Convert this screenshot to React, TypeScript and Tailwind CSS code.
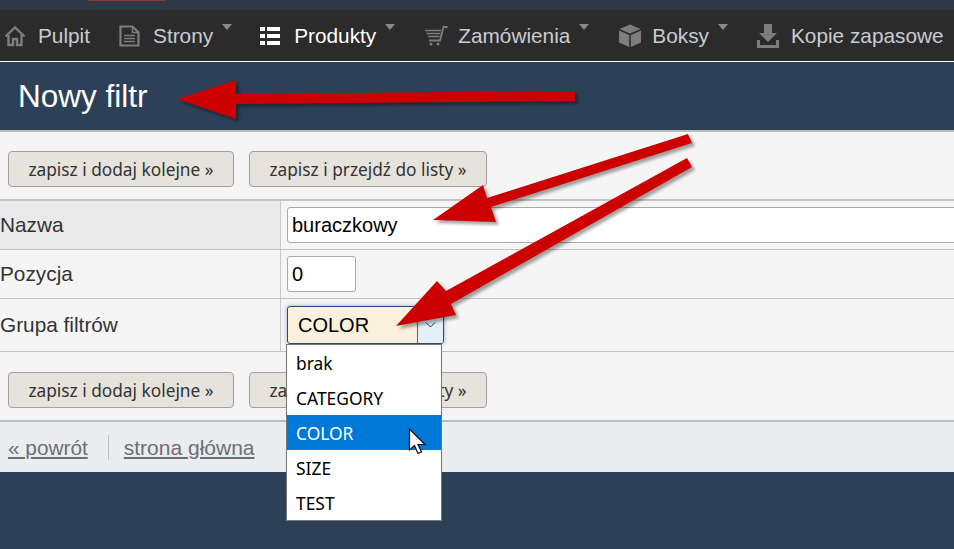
import type { ReactNode } from 'react';

const NAV_GRAY = '#7d7d7d';

function HomeIcon() {
  return (
    <svg width="22" height="22" viewBox="0 0 22 22" fill="none" stroke={NAV_GRAY} strokeWidth="2.4">
      <path d="M1.5 11.5 11 2.5l9.5 9" />
      <path d="M4.5 10v10h4.5v-6h4v6h4.5V10" />
    </svg>
  );
}

function PageIcon() {
  return (
    <svg width="22" height="22" viewBox="0 0 22 22" fill="none" stroke={NAV_GRAY}>
      <path d="M1.5 1.5h12l6 6v13h-18z" strokeWidth="2.2" />
      <path d="M13.5 2v5.5H19" strokeWidth="1.6" />
      <path d="M5 10.5h11M5 13.5h11M5 16.5h11" strokeWidth="1.6" />
    </svg>
  );
}

function ListIcon() {
  return (
    <svg width="20" height="20" viewBox="0 0 20 20" fill="#fff">
      <rect x="0" y="1" width="5" height="4" />
      <rect x="7" y="1" width="13" height="4" />
      <rect x="0" y="8" width="5" height="4" />
      <rect x="7" y="8" width="13" height="4" />
      <rect x="0" y="15" width="5" height="4" />
      <rect x="7" y="15" width="13" height="4" />
    </svg>
  );
}

function CartIcon() {
  return (
    <svg width="24" height="20" viewBox="0 0 24 20" fill="none" stroke={NAV_GRAY}>
      <path d="M23.5 1h-4l-3.5 13.5H5" strokeWidth="1.8" />
      <path d="M1 4.5h16M2.5 7.5h14M4 10.500h11.500" strokeWidth="1.6" />
      <circle cx="7" cy="18" r="1.500" fill={NAV_GRAY} stroke="none" />
      <circle cx="14" cy="18" r="1.500" fill={NAV_GRAY} stroke="none" />
    </svg>
  );
}

function BoxIcon() {
  return (
    <svg width="24" height="24" viewBox="0 0 24 24" fill={NAV_GRAY}>
      <path d="M12 0.500 22.500 5 12 9.500 1.500 5z" />
      <path d="M1 6.500 11.200 11v12L1 18.500z" />
      <path d="M23 6.500 12.800 11v12L23 18.500z" />
    </svg>
  );
}

function DownloadIcon() {
  return (
    <svg width="22" height="24" viewBox="0 0 22 24" fill={NAV_GRAY}>
      <path d="M7 0h8v9h5l-9 9-9-9h5z" />
      <path d="M0 16h3v5h16v-5h3v8H0z" />
    </svg>
  );
}

function NavItem({ icon, label, caret, active, className }: { icon: ReactNode; label: string; caret?: boolean; active?: boolean; className?: string }) {
  return (
    <div className={`flex items-center h-full shrink-0 ${className ?? ''}`}>
      <div className="w-[34px] shrink-0 flex items-center">{icon}</div>
      <span className={`text-[20.8px] leading-none pt-[1px] ${active ? 'text-white' : 'text-[#c8ccd2]'}`}>{label}</span>
      {caret && (
        <span className="ml-[9px] mb-[17px] w-0 h-0 border-x-[5.5px] border-x-transparent border-t-[6px] border-t-[#8a8a8a]"></span>
      )}
    </div>
  );
}

function SaveButtons() {
  return (
    <div className="flex gap-[15px]">
      <button className="w-[226px] h-[36px] pt-[2px] rounded-[4px] border border-[#a3a09b] bg-[#e6e2dc] text-[#333] text-[17.3px] font-['Noto_Sans',sans-serif]">
        zapisz i dodaj kolejne »
      </button>
      <button className="w-[238px] h-[36px] pt-[2px] rounded-[4px] border border-[#a3a09b] bg-[#e6e2dc] text-[#333] text-[17.3px] font-['Noto_Sans',sans-serif]">
        zapisz i przejdź do listy »
      </button>
    </div>
  );
}

function FormRow({ label, labelBg, height, children }: { label: string; labelBg?: string; height: string; children: ReactNode }) {
  return (
    <div className={`flex border-b border-[#c4c4c4] ${height}`}>
      <div className={`w-[281px] shrink-0 flex items-center text-[20.8px] text-[#333] border-r border-[#c9c9c9] ${labelBg ?? ''}`}>{label}</div>
      <div className="flex-1 pl-[6px] flex items-center">{children}</div>
    </div>
  );
}

function Arrows() {
  return (
    <svg className="absolute left-0 top-0 drop-shadow-[3px_3px_1.5px_rgba(0,0,0,0.35)] pointer-events-none" width="954" height="549" fill="#cc0000">
      <polygon points="177,99 236,80 236,94 575,91 575,101 236,104 236,119" />
      <polygon points="433,220 483,185 487,198 688,134 692,143 491,207 496,222" />
      <polygon points="396,326 437,281 446,291 687,158 692,167 451,304 456,315" />
    </svg>
  );
}

function Dropdown() {
  const options = ['brak', 'CATEGORY', 'COLOR', 'SIZE', 'TEST'];
  return (
    <div className="absolute left-[286px] top-[344px] w-[156px] border border-[#767676] bg-white font-['Noto_Sans',sans-serif] text-[17.4px]">
      {options.map(o => (
        <div key={o} className={`h-[35px] pl-[9px] pt-[2px] flex items-center ${o === 'COLOR' ? 'bg-[#0078d7] text-white' : 'text-black'}`}>
          {o}
        </div>
      ))}
    </div>
  );
}

function Cursor() {
  return (
    <svg className="absolute left-[408px] top-[428px]" width="20" height="28" viewBox="0 0 20 28">
      <path d="M1.500 1v21l5-4.500 3.500 8 3.500-1.500-3.500-7.500h7z" fill="#fff" stroke="#111" strokeWidth="1.200" />
    </svg>
  );
}

export default function App() {
  return (
    <div className="relative w-[954px] h-[549px] overflow-hidden bg-[#2c4058] font-['Liberation_Sans',Arial,sans-serif]">
      {/* Top strip */}
      <div className="relative h-[10px] bg-[#2f3844]">
        <div className="absolute left-[88px] top-[-3px] w-[78px] h-[4px] rounded-full bg-[#8a3a30]"></div>
      </div>

      {/* Menu */}
      <nav className="h-[51px] bg-[#2b2b2b] flex items-center pl-[4px] gap-[29px]">
        <NavItem icon={<HomeIcon />} label="Pulpit" />
        <NavItem icon={<PageIcon />} label="Strony" caret className="mr-[-1px]" />
        <NavItem icon={<ListIcon />} label="Produkty" caret active />
        <NavItem icon={<CartIcon />} label="Zamówienia" caret />
        <NavItem icon={<BoxIcon />} label="Boksy" caret />
        <NavItem icon={<DownloadIcon />} label="Kopie zapasowe" />
      </nav>
      <div className="h-px bg-white"></div>

      {/* Title */}
      <div className="h-[68px] flex items-center pl-[18px] pt-[2px]">
        <h1 className="text-[31.5px] text-white leading-none">Nowy filtr</h1>
      </div>

      <div className="bg-[#f5f5f5] border-t-2 border-[#bdbdbd]">
        <div className="h-[69px] pt-[19px] pl-[8px] border-b-2 border-[#c4c4c4]">
          <SaveButtons />
        </div>

        <FormRow label="Nazwa" labelBg="bg-[#e9e9e9]" height="h-[49px]">
          <input
            readOnly
            value="buraczkowy"
            className="w-[700px] h-[36px] shrink-0 px-[4px] rounded-[3px] border border-[#a9a9a9] bg-white text-[20px] text-black"
          />
        </FormRow>
        <FormRow label="Pozycja" height="h-[49px]">
          <input
            readOnly
            value="0"
            className="w-[69px] h-[36px] px-[4px] rounded-[3px] border border-[#a9a9a9] bg-white text-[20px] text-black"
          />
        </FormRow>
        <FormRow label="Grupa filtrów" height="h-[53px]">
          <div className="flex w-[157px] h-[38px] rounded-[3px] border border-[#1c4f80] bg-[#fbf0dc] shadow-[0_0_4px_rgba(60,90,160,0.5)] overflow-hidden">
            <div className="flex-1 pl-[10px] flex items-center text-[20px] text-black">COLOR</div>
            <div className="w-[26px] flex justify-center items-center bg-[#e3effa] border-l border-[#0078d7]">
              <svg width="11" height="6" viewBox="0 0 11 6" fill="none" stroke="#333" strokeWidth="1">
                <path d="M1 .5 5.500 5 10 .5" />
              </svg>
            </div>
          </div>
        </FormRow>

        <div className="h-[70px] pt-[20px] pl-[8px] border-b-2 border-[#bdbdbd]">
          <SaveButtons />
        </div>
      </div>

      {/* Footer links */}
      <div className="h-[50px] bg-[#eaecf0] flex items-center pl-[8px] pt-[2px] text-[20.8px] text-[#6c6f75]">
        <a className="underline">« powrót</a>
        <span className="ml-[20px] mr-[15px] mb-[2px] w-px h-[25px] bg-[#c0c2c6]"></span>
        <a className="underline text-[21px]">strona główna</a>
      </div>

      <Dropdown />
      <Arrows />
      <Cursor />
    </div>
  );
}
